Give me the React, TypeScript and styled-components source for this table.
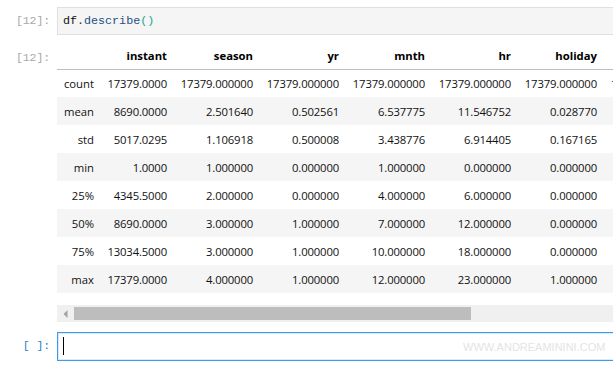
import React from 'react';
import styled, { createGlobalStyle } from 'styled-components';

const GlobalStyle = createGlobalStyle`
	html, body {
		margin: 0;
		padding: 0;
		background: #fff;
		overflow: hidden;
	}
	body {
		font-family: 'Open Sans', 'Noto Sans', sans-serif;
	}
`;

const columns = ['instant', 'season', 'yr', 'mnth', 'hr', 'holiday', 'weekday', 'workingday'];

// describe() output
const rows: [string, string[]][] = [
	['count', ['17379.0000', '17379.000000', '17379.000000', '17379.000000', '17379.000000', '17379.000000', '17379.000000', '17379.000000']],
	['mean', ['8690.0000', '2.501640', '0.502561', '6.537775', '11.546752', '0.028770', '3.003683', '0.682721']],
	['std', ['5017.0295', '1.106918', '0.500008', '3.438776', '6.914405', '0.167165', '2.005771', '0.465431']],
	['min', ['1.0000', '1.000000', '0.000000', '1.000000', '0.000000', '0.000000', '0.000000', '0.000000']],
	['25%', ['4345.5000', '2.000000', '0.000000', '4.000000', '6.000000', '0.000000', '1.000000', '0.000000']],
	['50%', ['8690.0000', '3.000000', '1.000000', '7.000000', '12.000000', '0.000000', '3.000000', '1.000000']],
	['75%', ['13034.5000', '3.000000', '1.000000', '10.000000', '18.000000', '0.000000', '5.000000', '1.000000']],
	['max', ['17379.0000', '4.000000', '1.000000', '12.000000', '23.000000', '1.000000', '6.000000', '1.000000']],
];

const colWidth = (i: number) => (i === 0 ? 73 : 86);

const App = () => {
	return (
		<Notebook>
			<GlobalStyle />
			<CellRow>
				<Prompt>[12]:</Prompt>
				<Editor>
					<Code>
						<Var>df</Var>
						<Op>.</Op>
						<Prop>describe</Prop>
						<Bracket>()</Bracket>
					</Code>
				</Editor>
			</CellRow>

			<OutputRow>
				<Prompt $top={8}>[12]:</Prompt>
				<OutputArea>
					<TableWrap>
						<Table>
							<colgroup>
								<col style={{ width: 43 }} />
								{columns.map((c, i) => (
									<col key={c} style={{ width: colWidth(i) }} />
								))}
							</colgroup>
							<thead>
								<tr>
									<HeadCell />
									{columns.map(c => (
										<HeadCell key={c}>{c}</HeadCell>
									))}
								</tr>
							</thead>
							<tbody>
								{rows.map(([label, values], idx) => (
									<BodyRow key={label} $striped={idx % 2 === 1}>
										<IndexCell>{label}</IndexCell>
										{values.map((v, i) => (
											<Cell key={i}>{v}</Cell>
										))}
									</BodyRow>
								))}
							</tbody>
						</Table>
					</TableWrap>
					<ScrollTrack>
						<ArrowButton>
							<svg width="5" height="8" viewBox="0 0 5 8">
								<path d="M4.5 0 L0.5 4 L4.5 8 Z" fill="#a3a3a3" />
							</svg>
						</ArrowButton>
						<ScrollThumb />
					</ScrollTrack>
				</OutputArea>
			</OutputRow>

			<CellRow $gap={10}>
				<Prompt $active>[ ]:</Prompt>
				<ActiveEditor>
					<Cursor />
				</ActiveEditor>
			</CellRow>

			<Watermark>WWW.ANDREAMININI.COM</Watermark>
		</Notebook>
	);
};

export default App;

// styles
const Notebook = styled.div`
	position: relative;
	width: 720px;
	height: 368px;
	padding-top: 7px;
	box-sizing: border-box;
`;

const CellRow = styled.div<{ $gap?: number }>`
	display: flex;
	align-items: stretch;
	margin-top: ${({ $gap }) => $gap ?? 0}px;
`;

const OutputRow = styled.div`
	display: flex;
	align-items: flex-start;
	margin-top: 7px;
`;

const Prompt = styled.div<{ $active?: boolean; $top?: number }>`
	flex: 0 0 57px;
	box-sizing: border-box;
	padding-right: 7px;
	padding-top: ${({ $top }) => $top ?? 6}px;
	text-align: right;
	font-family: 'Liberation Mono', 'DejaVu Sans Mono', monospace;
	font-size: 11.5px;
	line-height: 16px;
	color: ${({ $active }) => ($active ? '#307fc1' : '#a8a8a8')};
	letter-spacing: -0.1px;
`;

const Editor = styled.div`
	flex: 1;
	height: 28px;
	box-sizing: border-box;
	background: #f5f5f5;
	border: 1px solid #e0e0e0;
	padding: 5px 5px;
`;

const Code = styled.div`
	font-family: 'Liberation Mono', 'DejaVu Sans Mono', monospace;
	font-size: 11.7px;
	line-height: 17px;
	color: #000;
`;

const Var = styled.span`
	color: #111;
`;

const Op = styled.span`
	color: #333;
`;

const Prop = styled.span`
	color: #1f4f86;
`;

const Bracket = styled.span`
	color: #17a38f;
`;

const OutputArea = styled.div`
	flex: 1;
	min-width: 0;
`;

const TableWrap = styled.div`
	overflow: hidden;
`;

const Table = styled.table`
	border-collapse: collapse;
	table-layout: fixed;
	width: ${43 + 73 + 86 * 7}px;
	font-size: 11.3px;
	color: #111;
`;

const HeadCell = styled.th`
	height: 27px;
	box-sizing: border-box;
	padding: 0 6px;
	text-align: right;
	vertical-align: middle;
	font-weight: 700;
	color: #000;
	border-bottom: 1px solid #bdbdbd;
	white-space: nowrap;
`;

const BodyRow = styled.tr<{ $striped: boolean }>`
	height: 28px;
	background: ${({ $striped }) => ($striped ? '#f5f5f5' : '#fff')};
`;

const Cell = styled.td`
	padding: 0 6px;
	text-align: right;
	vertical-align: middle;
	white-space: nowrap;
	letter-spacing: -0.15px;
`;

const IndexCell = styled(Cell)`
	letter-spacing: 0;
`;

const ScrollTrack = styled.div`
	display: flex;
	align-items: center;
	margin-top: 12px;
	height: 17px;
	background: #f0f0f0;
`;

const ArrowButton = styled.div`
	flex: 0 0 17px;
	height: 17px;
	display: flex;
	align-items: center;
	justify-content: center;
`;

const ScrollThumb = styled.div`
	width: 397px;
	height: 13px;
	background: #bdbdbd;
`;

const ActiveEditor = styled.div`
	flex: 1;
	height: 29px;
	box-sizing: border-box;
	background: #fff;
	border: 1px solid #3d9bec;
	box-shadow: inset 0 0 0 1px #d6eafb;
	padding: 4px 5px;
`;

const Cursor = styled.div`
	width: 1px;
	height: 18px;
	background: #000;
`;

const Watermark = styled.div`
	position: absolute;
	left: 463px;
	top: 340px;
	font-family: 'Liberation Sans', Arial, sans-serif;
	font-size: 11px;
	line-height: 14px;
	color: #e4e4e4;
	white-space: nowrap;
	pointer-events: none;
`;
